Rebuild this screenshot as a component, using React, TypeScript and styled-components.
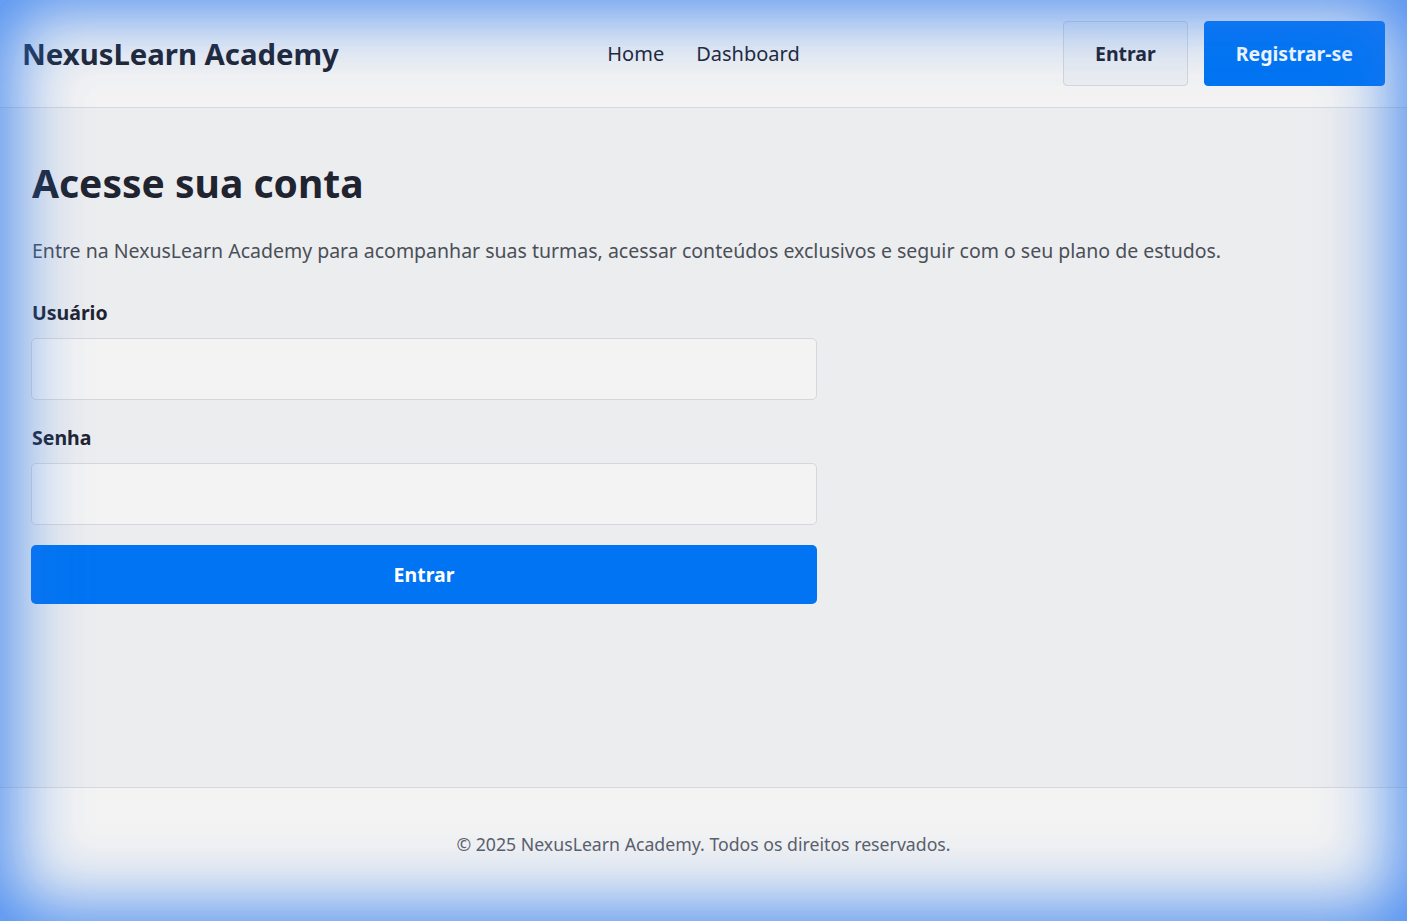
import React from 'react'
import styled, { createGlobalStyle } from 'styled-components'

const GlobalStyle = createGlobalStyle`
  * {
    box-sizing: border-box;
  }
  html,
  body {
    margin: 0;
    padding: 0;
    height: 100%;
  }
  body {
    font-family: 'Noto Sans', 'Open Sans', sans-serif;
    background-color: #ecedef;
    color: #1f2430;
  }
  #root {
    min-height: 100%;
  }
`

const Page = styled.div`
  min-height: 100vh;
  display: flex;
  flex-direction: column;
`

const Glow = styled.div`
  position: fixed;
  inset: 0;
  pointer-events: none;
  box-shadow: inset 0 0 70px 12px rgba(40, 120, 240, 0.85);
`

const Header = styled.header`
  display: grid;
  grid-template-columns: 1fr auto 1fr;
  align-items: center;
  height: 108px;
  padding: 0 22px;
  background-color: #f3f3f3;
  border-bottom: 1px solid #d6d8dc;
`

const Logo = styled.a`
  font-size: 29.3px;
  font-weight: 700;
  color: #1f2430;
  text-decoration: none;
`

const Nav = styled.nav`
  display: flex;
  gap: 32px;
`

const NavLink = styled.a`
  font-size: 20px;
  color: #1f2430;
  text-decoration: none;
`

const Actions = styled.div`
  display: flex;
  justify-content: flex-end;
  gap: 16px;
`

const HeaderButton = styled.button<{ $primary?: boolean }>`
  height: 65px;
  padding: 0 31px;
  border-radius: 4px;
  font-family: inherit;
  font-size: 19.5px;
  font-weight: 700;
  cursor: pointer;
  border: 1px solid ${(p) => (p.$primary ? '#0074f2' : '#d3d6dc')};
  background-color: ${(p) => (p.$primary ? '#0074f2' : '#eceef1')};
  color: ${(p) => (p.$primary ? '#ffffff' : '#1f2430')};
`

const Main = styled.main`
  flex: 1;
  padding: 50px 32px 40px 32px;
`

const Title = styled.h1`
  margin: 0 0 28px;
  font-size: 39px;
  font-weight: 700;
  line-height: 1.3;
  color: #1f2430;
`

const Intro = styled.p`
  margin: 0 0 35px;
  font-size: 19.5px;
  line-height: 1.4;
  color: #4a4f58;
`

const Form = styled.form`
  width: 786px;
  margin-left: -1px;
  display: flex;
  flex-direction: column;
`

const Label = styled.label`
  display: block;
  margin-bottom: 12px;
  padding-left: 1px;
  font-size: 19.5px;
  font-weight: 700;
  color: #1f2430;
`

const Input = styled.input`
  width: 100%;
  height: 62px;
  margin-bottom: 24px;
  padding: 0 16px;
  border: 1px solid #d5d7dc;
  border-radius: 5px;
  background-color: #f3f3f3;
  font-family: inherit;
  font-size: 20px;
  outline: none;

  &:last-of-type {
    margin-bottom: 20px;
  }
`

const SubmitButton = styled.button`
  height: 59px;
  border: none;
  border-radius: 5px;
  background-color: #0074f2;
  color: #ffffff;
  font-family: inherit;
  font-size: 19.5px;
  font-weight: 700;
  cursor: pointer;
`

const Footer = styled.footer`
  height: 134px;
  display: flex;
  align-items: flex-start;
  justify-content: center;
  padding-top: 44px;
  background-color: #f3f3f3;
  border-top: 1px solid #d6d8dc;
  font-size: 17.7px;
  line-height: 24px;
  color: #5a606b;
`

export default function App() {
  return (
    <>
      <GlobalStyle />
      <Page>
        <Header>
          <Logo href="#">NexusLearn Academy</Logo>
          <Nav>
            <NavLink href="#">Home</NavLink>
            <NavLink href="#">Dashboard</NavLink>
          </Nav>
          <Actions>
            <HeaderButton type="button">Entrar</HeaderButton>
            <HeaderButton type="button" $primary>
              Registrar-se
            </HeaderButton>
          </Actions>
        </Header>
        <Main>
          <Title>Acesse sua conta</Title>
          <Intro>
            Entre na NexusLearn Academy para acompanhar suas turmas, acessar conteúdos exclusivos e
            seguir com o seu plano de estudos.
          </Intro>
          <Form onSubmit={(e) => e.preventDefault()}>
            <Label htmlFor="usuario">Usuário</Label>
            <Input id="usuario" type="text" />
            <Label htmlFor="senha">Senha</Label>
            <Input id="senha" type="password" />
            <SubmitButton type="submit">Entrar</SubmitButton>
          </Form>
        </Main>
        <Footer>© 2025 NexusLearn Academy. Todos os direitos reservados.</Footer>
      </Page>
      <Glow />
    </>
  )
}
